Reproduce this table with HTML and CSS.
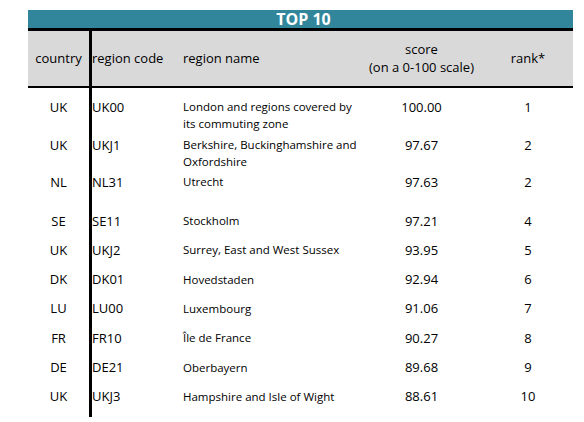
FILE: index.html
```html
<!DOCTYPE html>
<html lang="en">
<head>
<meta charset="utf-8">
<title>TOP 10</title>
<link rel="stylesheet" href="styles.css">
</head>
<body>
<div class="table">
  <div class="title">TOP 10</div>
  <div class="head vline">
    <div class="c1">country</div>
    <div class="c2">region code</div>
    <div class="c3">region name</div>
    <div class="c4">score<br>(on a 0-100 scale)</div>
    <div class="c5">rank*</div>
  </div>
  <div class="rows vline">
    <div class="c1">UK</div><div class="c2">UK00</div><div class="c3">London and regions covered by its commuting zone</div><div class="c4">100.00</div><div class="c5">1</div>
    <div class="c1">UK</div><div class="c2">UKJ1</div><div class="c3">Berkshire, Buckinghamshire and Oxfordshire</div><div class="c4">97.67</div><div class="c5">2</div>
    <div class="c1">NL</div><div class="c2">NL31</div><div class="c3">Utrecht</div><div class="c4">97.63</div><div class="c5">2</div>
    <div class="c1">SE</div><div class="c2">SE11</div><div class="c3">Stockholm</div><div class="c4">97.21</div><div class="c5">4</div>
    <div class="c1">UK</div><div class="c2">UKJ2</div><div class="c3">Surrey, East and West Sussex</div><div class="c4">93.95</div><div class="c5">5</div>
    <div class="c1">DK</div><div class="c2">DK01</div><div class="c3">Hovedstaden</div><div class="c4">92.94</div><div class="c5">6</div>
    <div class="c1">LU</div><div class="c2">LU00</div><div class="c3">Luxembourg</div><div class="c4">91.06</div><div class="c5">7</div>
    <div class="c1">FR</div><div class="c2">FR10</div><div class="c3">Île de France</div><div class="c4">90.27</div><div class="c5">8</div>
    <div class="c1">DE</div><div class="c2">DE21</div><div class="c3">Oberbayern</div><div class="c4">89.68</div><div class="c5">9</div>
    <div class="c1">UK</div><div class="c2">UKJ3</div><div class="c3">Hampshire and Isle of Wight</div><div class="c4">88.61</div><div class="c5">10</div>
  </div>
</div>
</body>
</html>
```

FILE: styles.css
```css
html, body {
  margin: 0;
  padding: 0;
  background: #ffffff;
}

body {
  font-family: "Open Sans", "Liberation Sans", sans-serif;
  color: #000000;
}

.table {
  width: 545px;
  margin: 10px 0 0 28px;
}

.title {
  background: #31869b;
  color: #ffffff;
  font-weight: 700;
  font-size: 16px;
  line-height: 18px;
  height: 18px;
  text-align: center;
  padding-left: 6px;
}

.head,
.rows {
  display: grid;
  grid-template-columns: 61px 91px 186px 111px 96px;
}

.vline {
  background-image: linear-gradient(#000000, #000000);
  background-repeat: no-repeat;
  background-position: 61px 0;
  background-size: 3px 100%;
}

.head {
  background-color: #d9d9d9;
  border-top: 3px solid #000000;
  border-bottom: 2px solid #000000;
  height: 55px;
  align-items: center;
  font-size: 13px;
  line-height: 17.5px;
}

.rows {
  padding-top: 10.5px;
  grid-template-rows: 38px 37px 39px repeat(6, 29.33px) 28.5px;
  align-items: start;
  font-size: 13px;
  line-height: 17px;
}

.c1 {
  text-align: center;
}

.c2 {
  padding-left: 3px;
}

.c3 {
  padding-left: 3px;
  padding-right: 6px;
}

.rows .c3 {
  font-size: 11.5px;
  line-height: 16.8px;
  padding-top: 0.6px;
}

.c4 {
  text-align: center;
}

.c5 {
  text-align: center;
  padding-left: 6px;
}
```
